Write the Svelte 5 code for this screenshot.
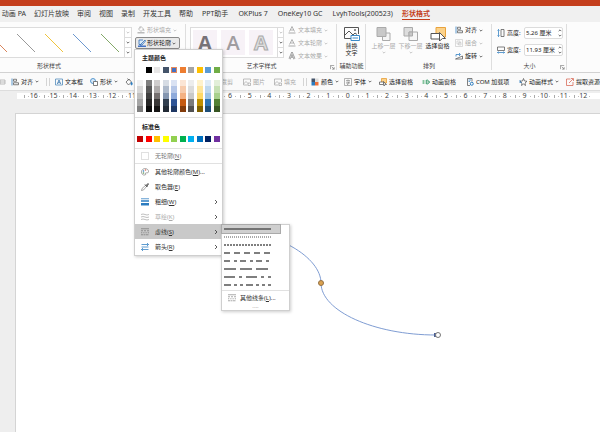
<script>
  const tabs = [
    { label: '幻灯片放映' }, { label: '审阅' }, { label: '视图' }, { label: '录制' },
    { label: '开发工具' }, { label: '帮助' }, { label: 'PPT助手', wide: true },
    { label: 'OKPlus 7', wide: true }, { label: 'OneKey10 GC', wide: true },
    { label: 'LvyhTools(200523)', wide: true }, { label: '形状格式', active: true }
  ];
  const lineStyles = ['#d9845b', '#999999', '#f0c43c', '#6c98d0', '#83a868'];
  const toolbar = [
    { icon: 'stub', label: '', off: true },
    { icon: 'align', label: '对齐', caret: true },
    { sep: true },
    { icon: 'textbox', label: '文本框' },
    { icon: 'shapes', label: '形状', caret: true },
    { icon: 'bucket', label: '填充', caret: true },
    { icon: 'outline', label: '轮廓', caret: true },
    { icon: 'crop', label: '裁剪', off: true },
    { icon: 'picture', label: '图片', off: true },
    { icon: 'picture', label: '填充', off: true },
    { sep: true },
    { icon: 'colors', label: '颜色', caret: true },
    { icon: 'font', label: '字体', caret: true },
    { icon: 'pane', label: '选择窗格' },
    { icon: 'anim', label: '动画窗格' },
    { icon: 'com', label: 'COM 加载项' },
    { icon: 'star', label: '动画样式', caret: true },
    { icon: 'extract', label: '提取资源' }
  ];
  const ruler = Array.from({ length: 29 }, (_, i) => Math.abs(i - 16));
  const theme = [
    ['#ffffff', '#f2f2f2', '#d8d8d8', '#bfbfbf', '#a5a5a5', '#7f7f7f'],
    ['#000000', '#7f7f7f', '#595959', '#3f3f3f', '#262626', '#0c0c0c'],
    ['#e7e6e6', '#d0cece', '#aeabab', '#757070', '#3a3838', '#171616'],
    ['#44546a', '#d6dce4', '#adb9ca', '#8496b0', '#323f4f', '#222a35'],
    ['#4472c4', '#d9e2f3', '#b4c6e7', '#8eaadb', '#2f5496', '#1f3864'],
    ['#ed7d31', '#fbe5d5', '#f7cbac', '#f4b183', '#c55a11', '#833c0b'],
    ['#a5a5a5', '#ededed', '#dbdbdb', '#c9c9c9', '#7b7b7b', '#525252'],
    ['#ffc000', '#fff2cc', '#fee599', '#ffd965', '#bf9000', '#7f6000'],
    ['#5b9bd5', '#deebf6', '#bdd7ee', '#9cc3e5', '#2e75b5', '#1e4e79'],
    ['#70ad47', '#e2efd9', '#c5e0b3', '#a8d08d', '#538135', '#375623']
  ];
  const standard = ['#c00000', '#ff0000', '#ffc000', '#ffff00', '#92d050', '#00b050', '#00b0f0', '#0070c0', '#002060', '#7030a0'];
  const menu = [
    { icon: 'palette', label: '其他轮廓颜色', key: 'M', dots: true },
    { icon: 'dropper', label: '取色器', key: 'E' },
    { icon: 'weight', label: '粗细', key: 'W', more: true },
    { icon: 'sketch', label: '草绘', key: 'K', more: true, off: true },
    { icon: 'dash', label: '虚线', key: 'S', more: true, open: true },
    { icon: 'arrows', label: '箭头', key: 'R', more: true }
  ];
  const dashes = ['', '1 1', '2 1', '6 4', '6 4 3 3', '12 4', '11 4 3 4', '7 3 3 3 3 3'];
</script>

{#snippet icon(name)}
  <svg class="icon" viewBox="0 0 16 16" fill="none" stroke="#555" stroke-width="1.5" aria-hidden="true">
    {#if name === 'stub'}
      <path d="M0 4h10v8H0zM0 8h10" stroke="#aaa" />
    {:else if name === 'align'}
      <path d="M2 1v14" stroke="#2b7cc0" /><path d="M5 2.500h6v4H5zM5 9.500h10v4H5z" />
    {:else if name === 'textbox'}
      <path d="M1 2h14v12H1z" stroke="#4a86b8" /><path d="M4.500 12 8 4l3.500 8M6 9.500h4" stroke="#2b6ca8" />
    {:else if name === 'shapes'}
      <circle cx="6" cy="6" r="5" stroke="#2b7cc0" fill="#d9eafa" /><path d="M7 7h8v8H7z" fill="#fff" />
    {:else if name === 'bucket'}
      <path d="m2 8 6-6 5 6-6 6zM5 1l3 4" /><path d="M13 8c3 4 1 6 0 6s-2-2 0-6" fill="#2b7cc0" stroke="#2b7cc0" />
    {:else if name === 'fill'}
      <path d="m3 6 5-5 5 5-5 5zM6 1v4M13 6l1 4" stroke="#aaa" /><path d="M1 12h14v3H1z" fill="#bbb" stroke="none" />
    {:else if name === 'outline'}
      <path d="M10 2H2v9h4M14 2 6 10l-1 3 3-1 7-8z" stroke="#2867b2" fill="#d9eafa" /><path d="M0 13h16v3H0z" fill="#4472c4" stroke="none" />
    {:else if name === 'crop'}
      <path d="M4 0v12h12M0 4h12v12" stroke="#aaa" />
    {:else if name === 'picture'}
      <path d="M9 14H1V2h14v6M1 12l5-5 4 4M10 10h5v5h-5z" stroke="#aaa" />
    {:else if name === 'colors'}
      <path d="M1 1h7v7H1z" fill="#44546a" stroke="none" /><path d="M8 1h7v7H8z" fill="#ddd" stroke="none" /><path d="M1 8h7v7H1z" fill="#2b7cc0" stroke="none" /><path d="M8 8h7v7H8z" fill="#ed7038" stroke="none" />
    {:else if name === 'font'}
      <path d="M1 1h14v14H1z" stroke="#999" /><path d="M4 5h8M8 3v2M5 8h6l-3 2v3H6M4 10h8" stroke="#666" stroke-width="1" />
    {:else if name === 'pane'}
      <path d="M5 1h10v9H5z" fill="#fbd28b" stroke="#e59a2d" /><path d="M1 8h8v5H1z" fill="#fff" /><path d="m9 7 6 6-3 .2L10 16z" fill="#fff" stroke="#555" />
    {:else if name === 'anim'}
      <path d="M0 6h9M0 10h9M3 4v8" stroke="#6db98b" /><path d="M9 4h3v8H9zM12 6l4 2-4 3" stroke="#3a9a68" />
    {:else if name === 'com'}
      <path d="M12 7V1H3v14h5" /><path d="M5 4h5M5 7h3" stroke="#2b7cc0" /><circle cx="11.500" cy="11.500" r="3" stroke="#2b7cc0" stroke-width="2" />
    {:else if name === 'star'}
      <path d="m9 1 2 5 5 .5-4 3.500 1 5-4-3-4 3 1-5-4-3.500 5-.5z" fill="#fff" /><path d="M0 6h4M1 9h4" stroke="#2b7cc0" />
    {:else if name === 'extract'}
      <path d="M9 2H1v13h13V8M6 10l8-8M10 1h5v5" stroke="#d76452" />
    {:else if name === 'group'}
      <path d="M1 1h14v14H1zM4 4h6v6H4zM7 7h5v5H7z" stroke="#bbb" stroke-width="1" />
    {:else if name === 'rotate'}
      <path d="M1 14h14V8z" /><path d="M2 9V5h8M8 2l3 3-3 3" stroke="#2b7cc0" />
    {:else if name === 'height'}
      <path d="M3 1v14M1 3l2-2 2 2M1 13l2 2 2-2" stroke="#2b7cc0" /><path d="M8 1h6v14H8z" />
    {:else if name === 'width'}
      <path d="M1 13h14M3 11l-2 2 2 2M13 11l2 2-2 2" stroke="#2b7cc0" /><path d="M1 2h14v7H1z" />
    {:else if name === 'textA'}
      <path d="M3 11 8 1l5 10M5 8h6" stroke="#999" /><path d="M1 13h14v2H1z" fill="#aaa" stroke="none" />
    {:else if name === 'textGlow'}
      <path d="M3 14 8 2l5 12M5 10h6" stroke="#999" stroke-width="4" /><path d="M3 14 8 2l5 12M5 10h6" stroke="#eee" stroke-width="1" />
    {:else if name === 'palette'}
      <path d="M8 14C3 15 1 11 1 8c0-9 14-9 14-1 0 4-4 2-6 3-1 2 2 3-1 4z" stroke-width="1" /><circle cx="5" cy="6" r="1" stroke="#2b7cc0" /><circle cx="9" cy="4" r="1" stroke="#d76452" /><circle cx="5" cy="10" r="1" stroke="#5a9a55" />
    {:else if name === 'dropper'}
      <path d="m1 15 1-4 7-6 2 2-6 7z" stroke-width="1" /><path d="m8 3 5 5M10 5l4-4 1 1-4 5" stroke="#444" stroke-width="2" />
    {:else if name === 'weight'}
      <path d="M0 1.500h16" stroke="#2b7cc0" /><path d="M0 6h16" stroke="#2b7cc0" stroke-width="3" /><path d="M0 12.500h16" stroke="#2b7cc0" stroke-width="5" />
    {:else if name === 'sketch'}
      <path d="M0 3q4-2 8 0t8 0M0 8q4-2 8 0t8 0M0 13q4-2 8 0t8 0" stroke="#aaa" />
    {:else if name === 'dash'}
      <g stroke-width="1"><path d="M0 1.500h16" /><path d="M0 5.500h16" stroke-dasharray="4 2" /><path d="M0 9.500h16" stroke-dasharray="2 1.500" /><path d="M0 13.500h16" stroke-dasharray="5 1 2 1" /></g>
    {:else if name === 'arrows'}
      <path d="M1 3h14M12 0l3 3-3 3M1 13h14M4 10l-3 3 3 3M1 8h14" stroke="#2b7cc0" />
    {/if}
  </svg>
{/snippet}

{#snippet caret()}
  <svg class="caret" viewBox="0 0 6 4" aria-hidden="true"><path d="m1 1 2 2 2-2" fill="none" stroke="currentColor" /></svg>
{/snippet}

{#snippet scroller()}
  <div class="scroller">
    <button aria-label="上一行" class="off">{@render caret()}</button>
    <button aria-label="下一行">{@render caret()}</button>
    <button aria-label="其他">{@render caret()}</button>
  </div>
{/snippet}

{#snippet launcher(name)}
  <button class="launcher" aria-label={name}>
    <svg viewBox="0 0 6 6" aria-hidden="true"><path d="M.5 5V.5H5M2 2l3 3M5 2.500V5H2.500" fill="none" stroke="#777" stroke-width=".8" /></svg>
  </button>
{/snippet}

<div class="app">
  <div class="title"></div>
  <nav class="tabs">
    <a href="#tab" class="first">动画 PA</a>
    {#each tabs as t}
      <a href="#tab" class:wide={t.wide} class:active={t.active}>{t.label}</a>
    {/each}
  </nav>

  <div class="ribbon">
    <section class="group shape">
      <div class="body">
        <div class="gallery lines">
          {#each lineStyles as c}
            <button aria-label="线条样式"><svg viewBox="0 0 20 20" aria-hidden="true"><path d="m1 1 18 18" stroke={c} /></svg></button>
          {/each}
          {@render scroller()}
        </div>
        <div class="stack outlines">
          <button class="off">{@render icon('fill')}形状填充{@render caret()}</button>
          <div class="anchor">
            <button class="pressed">{@render icon('outline')}形状轮廓{@render caret()}</button>
            <div class="menu">
              <h3>主题颜色</h3>
              <div class="swatches">
                {#each theme as col, i}
                  <button aria-label="主题颜色" class:chosen={i === 4} style="background:{col[0]}"></button>
                {/each}
              </div>
              <div class="tints">
                {#each theme as col}
                  <div>
                    {#each col.slice(1) as c}<button aria-label="主题颜色" style="background:{c}"></button>{/each}
                  </div>
                {/each}
              </div>
              <h3 class="std">标准色</h3>
              <div class="swatches">
                {#each standard as c}<button aria-label="标准色" style="background:{c}"></button>{/each}
              </div>
              <button class="item none"><span class="box"></span><span>无轮廓(<u>N</u>)</span></button>
              {#each menu as m}
                <div class="row">
                  <button class="item" class:off={m.off} class:open={m.open}>
                    {@render icon(m.icon)}
                    <span>{m.label}(<u>{m.key}</u>){m.dots ? '...' : ''}</span>
                    {#if m.more}<svg class="chev" viewBox="0 0 4 6" aria-hidden="true"><path d="m1 1 2 2-2 2" fill="none" stroke="currentColor" stroke-width=".8" /></svg>{/if}
                  </button>
                  {#if m.open}
                    <div class="submenu">
                      {#each dashes as d, i}
                        <button class="dash" class:sel={i === 0} aria-label="虚线样式">
                          <svg viewBox="0 0 47 2" aria-hidden="true"><path d="M0 1h47" stroke="#555" stroke-width={i === 1 ? 1 : 1.5} stroke-dasharray={d} /></svg>
                        </button>
                      {/each}
                      <button class="item last">{@render icon('dash')}<span>其他线条(<u>L</u>)...</span></button>
                      <div class="grip">····</div>
                    </div>
                  {/if}
                </div>
              {/each}
            </div>
          </div>
        </div>
      </div>
      <footer class="shape-label">形状样式</footer>
    </section>

    <section class="group art">
      <div class="body">
        <div class="gallery letters">
          <button class="a1">A</button><button class="a2">A</button><button class="a3">A</button>
          {@render scroller()}
        </div>
        <div class="stack off">
          <button>{@render icon('textA')}文本填充{@render caret()}</button>
          <button>{@render icon('textA')}文本轮廓{@render caret()}</button>
          <button>{@render icon('textGlow')}文本效果{@render caret()}</button>
        </div>
      </div>
      <footer>艺术字样式</footer>
      {@render launcher('艺术字样式设置')}
    </section>

    <section class="group alt">
      <div class="body">
        <button class="big">
          <svg viewBox="0 0 32 28" fill="none" stroke="#555" stroke-width="2" aria-hidden="true"><path d="M16 23H1V1h28v13M1 17l9-9 8 8 4-4 4 3" /><circle cx="22" cy="6" r="1" fill="#555" /><path d="M14 17h17v10H14z" fill="#fff" stroke="#3a8ac8" /><path d="M17 22h11" stroke="#3a8ac8" /></svg>
          <span>替换<br />文字</span>
        </button>
      </div>
      <footer>辅助功能</footer>
    </section>

    <section class="group arrange">
      <div class="body">
        <button class="big off">
          <svg viewBox="0 0 32 28" stroke="#aaa" stroke-width="2" aria-hidden="true"><path d="M13 12h15v15H13z" fill="#f5f5f5" /><path d="M2 1h18v18H2z" fill="#c8c8c8" /></svg>
          <span>上移一层</span>{@render caret()}
        </button>
        <button class="big off">
          <svg viewBox="0 0 32 28" stroke="#aaa" stroke-width="2" aria-hidden="true"><path d="M2 1h17v17H2z" fill="#ddd" /><path d="M12 10h17v17H12z" fill="#f7f7f7" /><path d="M12 10h7v8h-7z" fill="#c8c8c8" /></svg>
          <span>下移一层</span>{@render caret()}
        </button>
        <button class="big">
          <svg viewBox="0 0 32 28" stroke="#555" stroke-width="2" aria-hidden="true"><path d="M12 1h19v19H12z" fill="#fbd28b" stroke="#e9a33d" /><path d="M2 13h19v11H2z" fill="#fff" /><path d="m19 11 12 12h-6l-6 5z" fill="#fff" /></svg>
          <span>选择窗格</span>
        </button>
        <div class="stack">
          <button>{@render icon('align')}对齐{@render caret()}</button>
          <button class="off">{@render icon('group')}组合{@render caret()}</button>
          <button>{@render icon('rotate')}旋转{@render caret()}</button>
        </div>
      </div>
      <footer>排列</footer>
    </section>

    <section class="group size">
      <div class="body fields">
        <label>{@render icon('height')}<span>高度:</span><span class="spin"><input value="5.26 厘米" /><i>{@render caret()}{@render caret()}</i></span></label>
        <label>{@render icon('width')}<span>宽度:</span><span class="spin"><input value="11.93 厘米" /><i>{@render caret()}{@render caret()}</i></span></label>
      </div>
      <footer>大小</footer>
      {@render launcher('大小设置')}
    </section>
  </div>

  <div class="toolbar">
    {#each toolbar as t}
      {#if t.sep}
        <span class="sep"></span>
      {:else}
        <button class:off={t.off} aria-label={t.label || '工具'}>{@render icon(t.icon)}{t.label}{#if t.caret}{@render caret()}{/if}</button>
      {/if}
    {/each}
  </div>

  <div class="ruler">
    {#each ruler as n}
      <div><span>{n}</span></div>
    {/each}
  </div>

  <main>
    <svg aria-hidden="true">
      <path d="M200 115C262 115 305 144 305 169C305 197 358 221 420 221" fill="none" stroke="#7f9dd3" />
      <circle cx="305" cy="169" r="2.500" fill="#dba250" stroke="#927044" />
      <path d="M418 219h3v4h-3z" fill="#4b5f94" />
      <circle cx="422" cy="221" r="2.500" fill="#fff" stroke="#777" />
    </svg>
  </main>
</div>

<style>
  :global(body) { margin: 0; }
  .app {
    min-height: 100vh; display: flex; flex-direction: column; overflow: hidden;
    background: #eeeeee; color: #222;
    font: 6px/8px "Noto Sans", "Noto Sans CJK SC", sans-serif; white-space: nowrap;
  }
  .app * { box-sizing: border-box; }
  button, input { font: inherit; color: inherit; background: none; border: 0; padding: 0; margin: 0; white-space: nowrap; }
  button { display: flex; align-items: center; }
  .icon { width: 8px; height: 8px; flex: none; }
  .caret { width: 4px; height: 3px; flex: none; }
  .off { color: #aaa; }

  .title { height: 6px; background: #c43e1c; }
  .tabs { height: 16px; display: flex; gap: 8px; align-items: center; background: #f0f0f0; font-size: 7px; line-height: 10px; }
  .tabs a { color: #333; text-decoration: none; flex: none; border-bottom: 1px solid transparent; }
  .tabs .first { width: 26px; display: flex; justify-content: flex-end; }
  .tabs .wide { padding: 0 1px; }
  .tabs .active { color: #c43e1c; font-weight: bold; border-color: #c43e1c; }

  .ribbon { height: 51px; display: flex; background: #fcfcfc; border-bottom: 1px solid #d2d2d2; }
  .group { position: relative; display: flex; flex-direction: column; padding: 2px 0 1px; flex: none; }
  .group::after { content: ""; position: absolute; right: 0; top: 2px; bottom: 2px; width: 1px; background: #dedede; }
  .body { display: flex; flex: 1; }
  footer { text-align: center; height: 9px; color: #444; }
  .shape { width: 186px; }
  .art { width: 151px; }
  .alt { width: 29px; }
  .arrange { width: 126px; }
  .size { width: 75px; }
  .shape-label { width: 98px; }
  .launcher { position: absolute; right: 2px; bottom: 2px; }
  .launcher svg { width: 5px; height: 5px; }

  .gallery { height: 31px; margin-top: 3px; display: flex; border: 1px solid #dcdcdc; background: #fff; flex: none; }
  .lines { width: 132px; border-left: 0; justify-content: flex-end; overflow: hidden; }
  .lines > button { width: 28px; justify-content: center; flex: none; }
  .lines > button > svg { width: 20px; height: 20px; }
  .scroller { width: 7px; display: flex; flex-direction: column; border-left: 1px solid #dcdcdc; flex: none; }
  .letters .scroller { margin-left: auto; }
  .scroller button { flex: 1; width: 100%; justify-content: center; }
  .scroller button + button { border-top: 1px solid #dcdcdc; }
  .letters { width: 94px; margin-left: 4px; padding-left: 2px; gap: 4px; }
  .letters > button { width: 24px; height: 25px; margin-top: 2px; justify-content: center; background: #f7f2f7; font: bold 20px/24px "Open Sans", "Noto Sans", sans-serif; color: #777277; flex: none; }
  .letters .a2 { font-weight: 600; color: #a09ca0; }
  .letters .a3 { color: #ddd; -webkit-text-stroke: 1px #aaa; }

  .stack { display: flex; flex-direction: column; gap: 1px; margin-left: 4px; }
  .stack button { height: 12px; gap: 2px; }
  .outlines { margin-left: 3px; }
  .outlines > button { padding-left: 2px; }
  .anchor { position: relative; }
  .pressed { padding: 0 2px; width: 45px; border: 1px solid #8a8a8a; border-radius: 2px; background: #e9e9e9; }
  .stack .pressed { gap: 1px; }

  .big { flex-direction: column; width: 27px; text-align: center; line-height: 7px; padding-top: 3px; gap: 1px; }
  .big > svg:first-child { width: 16px; height: 14px; margin-bottom: 1px; }
  .alt .big { width: 100%; }
  .arrange .body { padding-left: 4px; }
  .fields { flex-direction: column; gap: 5px; padding: 3px 4px 0 5px; flex: 1; }
  label { display: flex; align-items: center; gap: 2px; }
  label > span:first-of-type { width: 15px; }
  .spin { flex: 1; height: 12px; min-width: 0; display: flex; border: 1px solid #dcdcdc; border-radius: 2px; background: #fff; }
  .spin input { flex: 1; min-width: 0; width: 20px; padding-left: 1px; outline: 0; }
  .spin i { display: flex; flex-direction: column; justify-content: space-around; }
  .spin .caret:first-child { transform: rotate(180deg); }

  .toolbar {
    height: 18px; display: grid; align-items: center; background: #fafafa; border-bottom: 1px solid #ddd;
    grid-template-columns: 11px 35px 9px 35px 35px 32px 54px 32px 31px 29px 8px 33px 35px 43px 44px 53px 47px 1fr;
  }
  .toolbar button { gap: 2px; }
  .toolbar .sep { width: 4px; height: 8px; border: solid #d4d4d4; border-width: 0 1px; }

  .ruler { margin: 2px 0 0 17px; padding: 0 7px; height: 6px; display: flex; background: #fff; font-size: 7px; line-height: 6px; color: #444; }
  .ruler div {
    flex: 1; text-align: center;
    background: linear-gradient(#aaa, #aaa) 0 50% / 1px 3px no-repeat, linear-gradient(#bbb, #bbb) 4px 50% / 1px 1px no-repeat, linear-gradient(#bbb, #bbb) 15px 50% / 1px 1px no-repeat;
  }
  .ruler span { display: block; }

  main { flex: 1; margin: 14px 0 0 15px; border: solid #d4d4d4; border-width: 1px 0 0 1px; background: #fff; display: flex; }
  main svg { flex: 1; }

  .menu {
    position: absolute; left: -1px; top: 12px; width: 89px; z-index: 2; padding: 4px 0 1px;
    background: #fff; border: 1px solid #cfcfcf; box-shadow: 1px 1px 3px #0003;
  }
  h3 { margin: 0 7px; font-size: 6px; line-height: 8px; color: #222; }
  .swatches, .tints { display: flex; justify-content: space-between; padding: 0 2px; }
  .menu .swatches button { width: 6px; height: 6px; }
  .swatches { margin-top: 5px; }
  .menu .swatches .chosen { outline: 1px solid #e58a5c; outline-offset: -1px; }
  .tints { margin-top: 7px; padding-bottom: 5px; border-bottom: 1px solid #e1e1e1; }
  .tints > div { height: 32px; display: flex; flex-direction: column; }
  .menu .tints button { width: 6px; height: auto; flex: 1; }
  .std { margin-top: 5px; }
  .menu .item { width: 100%; height: 15px; padding: 0 4px 0 6px; gap: 6px; color: #333; }
  .menu .item.off { color: #aaa; }
  .menu .none { height: 16px; margin-top: 6px; border: solid #e1e1e1; border-width: 1px 0; color: #777; }
  .box { width: 8px; height: 8px; border: 1px solid #e0e0e0; }
  .chev { width: 4px; height: 6px; margin-left: auto; color: #333; }
  .row { position: relative; }
  .menu .open { background: #c9c9c9; }
  .submenu {
    position: absolute; left: 86px; top: 0; width: 69px; z-index: 3;
    background: #fff; border: 1px solid #cfcfcf; box-shadow: 1px 1px 3px #0003;
  }
  .submenu .dash { height: 8px; width: 58px; padding-left: 2px; }
  .submenu .dash.sel { outline: 1px solid #aaa; background: #cfcfcf; }
  .dash svg { width: 47px; height: 2px; }
  .submenu .last { border-top: 1px solid #e1e1e1; margin-top: 1px; gap: 4px; }
  .grip { text-align: center; line-height: 5px; color: #777; }
</style>
